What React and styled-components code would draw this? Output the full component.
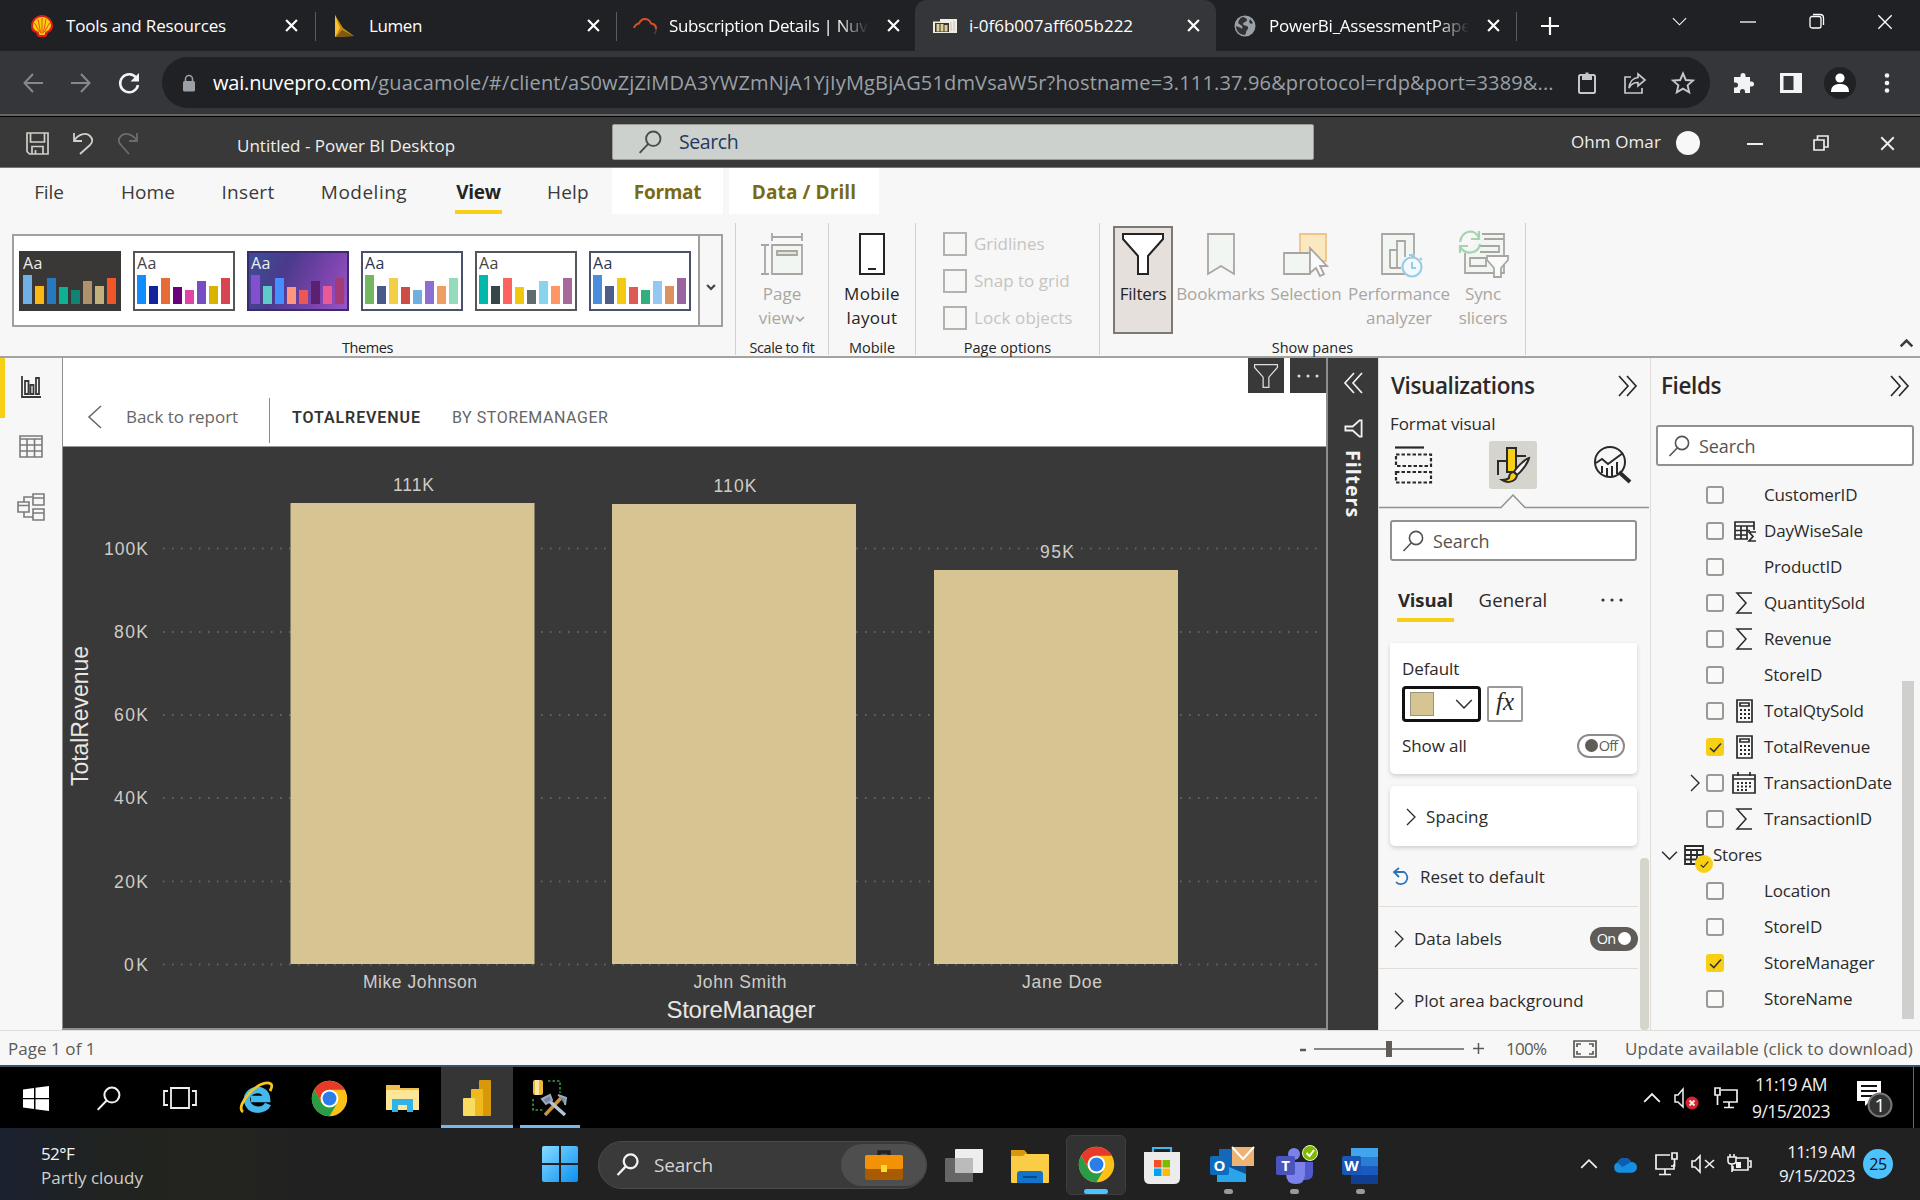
import React from "react";
import styled, { createGlobalStyle, css } from "styled-components";

const UI = `"Open Sans", "Noto Sans", sans-serif`;

const Global = createGlobalStyle`
  * { box-sizing: border-box; }
  body { margin: 0; background: #202124; font-family: ${UI}; overflow: hidden; }
`;

/* ---------- primitives ---------- */
const Screen = styled.div`
  width: 1920px;
  height: 1200px;
  display: flex;
  flex-direction: column;
  overflow: hidden;
`;
const Text = styled.span`
  font-size: ${(p) => p.$s || 17}px;
  font-weight: ${(p) => p.$b || 400};
  letter-spacing: ${(p) => p.$ls || 0}px;
  color: ${(p) => p.$c || "inherit"};
  white-space: nowrap;
  line-height: 24px;
`;
const Cell = styled.div`
  flex: none;
  width: ${(p) => p.$w}px;
  padding-top: ${(p) => p.$pt || 0}px;
  padding-bottom: ${(p) => p.$pb || 0}px;
  display: flex;
  align-items: center;
  justify-content: ${(p) => (p.$left ? "flex-start" : "center")};
`;
const Spacer = styled.div`
  flex: 1;
`;
const Glyph = styled.svg`
  display: block;
  flex: none;
  overflow: visible;
`;
const Ico = ({ w = 24, h, vb, sw = 1.6, children, ...rest }) => (
  <Glyph width={w} height={h || w} viewBox={vb || `0 0 ${w} ${h || w}`} fill="none" stroke="currentColor" strokeWidth={sw} {...rest}>
    {children}
  </Glyph>
);

const Lens = ({ w = 22, sw = 1.6 }) => (
  <Ico w={w} vb="0 0 22 22" sw={sw}>
    <circle cx="14" cy="8" r="6.6" />
    <path d="M9.4 12.8 L1.5 21" />
  </Ico>
);
const Chevron = ({ dir = "down", w = 18, sw = 1.5 }) => {
  const d = { down: "M2 5.5 L9 12.5 L16 5.5", up: "M2 12.5 L9 5.5 L16 12.5", right: "M5 1 L13 9 L5 17", left: "M13 1 L5 9 L13 17" }[dir];
  return (
    <Ico w={w} vb="0 0 18 18" sw={sw}>
      <path d={d} />
    </Ico>
  );
};
const DoubleChevron = ({ left }) => (
  <Ico w={20} h={22} sw={1.7}>
    {left ? <path d="M11 1 L2 11 L11 21 M19 1 L10 11 L19 21" /> : <path d="M1 1 L10 11 L1 21 M9 1 L18 11 L9 21" />}
  </Ico>
);
const Cross = ({ w = 12, sw = 2 }) => (
  <Ico w={w} vb="0 0 12 12" sw={sw}>
    <path d="M1 1 L11 11 M11 1 L1 11" />
  </Ico>
);
const Funnel = ({ w = 30, h = 30, sw = 1.6, fill = "none" }) => (
  <Ico w={w} h={h} vb="0 0 42 42" sw={sw} fill={fill}>
    <path d="M1 1 H41 V6 L26 23 V41 H16 V23 L1 6 Z" />
  </Ico>
);
const ChromeLogo = ({ w = 38 }) => (
  <Glyph width={w} height={w} viewBox="0 0 48 48">
    <circle cx="24" cy="24" r="23" fill="#fbc116" />
    <path d="M4.1 12.5 A23 23 0 0 1 43.9 12.5 H24 A11.5 11.5 0 0 0 14 29.8 Z" fill="#e8392b" />
    <path d="M4.1 12.5 A23 23 0 0 0 24 47 L34 29.8 A11.5 11.5 0 0 1 14 29.8 Z" fill="#2a9c47" />
    <circle cx="24" cy="24" r="11.5" fill="#fff" />
    <circle cx="24" cy="24" r="9" fill="#2b7de9" />
  </Glyph>
);

/* ---------- browser ---------- */
const TabStrip = styled.div`
  height: 51px;
  flex: none;
  display: flex;
  background: #202124;
  color: #fff;
`;
const TabBox = styled.div`
  position: relative;
  width: ${(p) => p.$w}px;
  padding: 0 ${(p) => p.$pr}px 0 ${(p) => p.$pl}px;
  display: flex;
  align-items: center;
  gap: 12px;
  ${(p) =>
    p.$active &&
    css`
      background: #35363a;
      border-radius: 12px 12px 0 0;
    `}
  &::after {
    content: "";
    position: absolute;
    right: 0;
    top: 12px;
    width: 1px;
    height: 29px;
    background: ${(p) => (p.$line ? "#5a5c60" : "transparent")};
  }
`;
const TabTitle = styled.div`
  flex: 1;
  min-width: 0;
  overflow: hidden;
  white-space: nowrap;
  font-size: 17px;
  letter-spacing: ${(p) => p.$ls}px;
  ${(p) => p.$fade && "mask-image: linear-gradient(90deg, #000 84%, transparent 100%);"}
`;
const TabIcon = styled.div`
  width: 24px;
  display: flex;
  justify-content: center;
`;
const Toolbar = styled.div`
  height: 63px;
  flex: none;
  display: flex;
  align-items: center;
  background: #35363a;
  color: #e8eaed;
  padding-left: 9px;
`;
const Omnibox = styled.div`
  width: 1548px;
  height: 51px;
  margin-left: 8px;
  border-radius: 26px;
  background: #202124;
  display: flex;
  align-items: center;
  padding-left: 20px;
`;
const Url = styled.div`
  width: 1350px;
  margin-left: 17px;
  font-size: 20px;
  letter-spacing: ${(p) => p.$ls}px;
  white-space: nowrap;
  color: #9aa0a6;
  b {
    font-weight: 400;
    color: #fff;
    letter-spacing: -0.18px;
  }
`;
const Divider = styled.div`
  height: 3px;
  flex: none;
  background: #636465;
  border-bottom: 1px solid #000;
`;
const ProfileDot = styled.div`
  width: 32px;
  height: 32px;
  border-radius: 50%;
  background: #202124;
  display: flex;
  align-items: center;
  justify-content: center;
`;

const ShellLogo = () => (
  <Glyph width="24" height="24" viewBox="0 0 24 24">
    <path d="M12 1 C18 1 23 6 23 12 C23 16 20 18 18 19 L16 23 H8 L6 19 C3 18 1 16 1 12 C1 6 6 1 12 1Z" fill="#dd1d21" />
    <path d="M12 3 C17 3 21 7 21 12 C20 16 17 17 15.500 18 L14.500 21 H9.500 L8.500 18 C6 17 3 15 3 12 C3 7 7 3 12 3Z" fill="#fbce07" />
    <path d="M12 4 V20 M8 5 L10.600 19 M16 5 L13.400 19 M4.500 9 L9.600 18 M19.500 9 L14.400 18" stroke="#dd1d21" strokeWidth=".7" />
  </Glyph>
);
const LumenLogo = () => (
  <Glyph width="22" height="24" viewBox="0 0 22 24">
    <path d="M1 1 L9 14 L20 22 L1 23 Z" fill="#c28a10" />
    <path d="M1 1 L6 14 L1 23 Z" fill="#fbc02d" />
    <path d="M8 16 L20 22 L2 23 Z" fill="#7d5a14" />
  </Glyph>
);
const CloudLogo = () => (
  <Ico w={24} sw={1.9}>
    <path d="M1 14 C2 11 3 10 6 9.500 C9 3 16 4 18 9.500 C22 10 23.500 12 23 16" stroke="#e04e27" />
    <path d="M23 15 C23 17 22.500 19 21.500 20" stroke="#1d4b63" />
  </Ico>
);
const SheetLogo = () => (
  <Glyph width="24" height="14" viewBox="0 0 24 14">
    <rect width="24" height="14" fill="#f0ede4" />
    <rect width="7" height="2.500" fill="#35363a" />
    <rect x="2" y="4" width="14" height="9" fill="#3a3530" />
    <path d="M3.500 12.500 V5 H6.500 V12.500Z M7.500 12.500 V5 H10.500 V12.500Z M11.500 12.500 V6 H14.500 V12.500Z" fill="#ddcf9a" />
    <path d="M18 3 V12 M21 2 V12" stroke="#c8c4ba" />
  </Glyph>
);
const GlobeLogo = () => (
  <Glyph width="22" height="22" viewBox="0 0 22 22">
    <circle cx="11" cy="11" r="10.500" fill="#9aa0a6" />
    <path d="M9 2 C11 3 13 3 13 5 C13 7 9 7 9 9 C9 11 13 10 14 12 C15 14 12 15 12 18 L11 20 C6 20 2 16 2 11 L7 13 C8 15 9 13 8 11 L4 8 C5 4 7 2 9 2 Z" fill="#303236" />
    <path d="M16 4 L19 8 L17 9 L15 7Z" fill="#303236" />
  </Glyph>
);

const tabs = [
  { t: "Tools and Resources", w: 316, pl: 30, pr: 13, i: <ShellLogo />, line: 1, ls: -0.15 },
  { t: "Lumen", w: 301, pl: 17, pr: 12, i: <LumenLogo />, line: 1, ls: -0.4 },
  { t: "Subscription Details | Nuvepro", w: 298, pl: 16, pr: 10, i: <CloudLogo />, fade: 1, ls: -0.35 },
  { t: "i-0f6b007aff605b222", w: 301, pl: 18, pr: 11, i: <SheetLogo />, active: 1, ls: 0 },
  { t: "PowerBi_AssessmentPaper.pdf", w: 301, pl: 17, pr: 12, i: <GlobeLogo />, line: 1, fade: 1, ls: -0.25 },
];

const Browser = () => (
  <>
    <TabStrip>
      {tabs.map((t) => (
        <TabBox key={t.t} $w={t.w} $pl={t.pl} $pr={t.pr} $active={t.active} $line={t.line}>
          <TabIcon>{t.i}</TabIcon>
          <TabTitle $fade={t.fade} $ls={t.ls}>{t.t}</TabTitle>
          <TabIcon><Cross w={13} /></TabIcon>
        </TabBox>
      ))}
      <Cell $w={65}>
        <Ico w={18} sw={2.2}><path d="M9 0 V18 M0 9 H18" /></Ico>
      </Cell>
      <Spacer />
      <Cell $w={68} $pb={8}><Chevron w={17} sw={1.1} /></Cell>
      <Cell $w={70} $pb={8}><Ico w={16} sw={1.3}><path d="M0 8 H16" /></Ico></Cell>
      <Cell $w={67} $pb={8}>
        <Ico w={15} sw={1.3}>
          <rect x="1" y="2.500" width="11" height="11.500" rx="2" />
          <path d="M4 .5 H11 Q14.500 .5 14.500 4 V11" />
        </Ico>
      </Cell>
      <Cell $w={70} $pb={8}><Cross w={16} sw={1} /></Cell>
    </TabStrip>
    <Toolbar>
      <Cell $w={48}>
        <Ico w={20} sw={2} color="#85888c"><path d="M20 10 H1.500 M10 1 L1.500 10 L10 19" /></Ico>
      </Cell>
      <Cell $w={48}>
        <Ico w={20} sw={2} color="#85888c"><path d="M0 10 H18.500 M10 1 L18.500 10 L10 19" /></Ico>
      </Cell>
      <Cell $w={48}>
        <Ico w={22} sw={2.5} color="#f1f3f4">
          <path d="M18.500 6 A9 9 0 1 0 20 13" />
          <path d="M21 1 V9.500 H12.500 Z" fill="currentColor" stroke="none" />
        </Ico>
      </Cell>
      <Cell $w={1} />
      <Omnibox>
        <Ico w={14} h={18} color="#9aa0a6">
          <rect x="1" y="7" width="12" height="10.500" rx="1.500" fill="currentColor" stroke="none" />
          <path d="M3.500 8 V5 a3.500 3.500 0 0 1 7 0 V8" />
        </Ico>
        <Url $ls={0.15}>
          <b>wai.nuvepro.com</b>/guacamole/#/client/aS0wZjZiMDA3YWZmNjA1YjIyMgBjAG51dmVsaW5r?hostname=3.111.37.96&amp;protocol=rdp&amp;port=3389&amp;...
        </Url>
        <Cell $w={48}>
          <Ico w={18} h={22} sw={2} color="#c4c7cb">
            <rect x="1" y="3" width="16" height="18" rx="1.500" />
            <path d="M5 3 H13 V7 H5Z M7.500 1.500 H10.500" fill="currentColor" />
          </Ico>
        </Cell>
        <Cell $w={48}>
          <Ico w={22} sw={1.700} color="#c4c7cb">
            <path d="M7 5 H1 V21 H18 V16" />
            <path d="M14 2 L21 8 L14 14 V10.500 C10 10.500 7 12 5 16 C5.500 10 9 6 14 5.500 Z" />
          </Ico>
        </Cell>
        <Cell $w={48}>
          <Ico w={22} sw={1.900} color="#c4c7cb">
            <path d="M11 1.500 L13.800 8 L21 8.600 L15.600 13.300 L17.200 20.300 L11 16.600 L4.800 20.300 L6.400 13.300 L1 8.600 L8.200 8 Z" />
          </Ico>
        </Cell>
      </Omnibox>
      <Cell $w={65}>
        <Ico w={22} color="#f1f3f4">
          <path d="M8.500 5 V3.500 a2.500 2.500 0 0 1 5 0 V5 H18 V9.500 H19.500 a2.500 2.500 0 0 1 0 5 H18 V21 H13 V19.500 a2.500 2.500 0 0 0 -5 0 V21 H2 V15.500 H3.500 a2.500 2.500 0 0 0 0 -5 H2 V5 Z" fill="currentColor" stroke="none" />
        </Ico>
      </Cell>
      <Cell $w={32}>
        <Ico w={22} color="#f1f3f4">
          <path d="M0 1 H22 V21 H0Z M3.500 4 V18 H13.500 V4Z" fillRule="evenodd" fill="currentColor" stroke="none" />
        </Ico>
      </Cell>
      <Cell $w={65}>
        <ProfileDot>
          <Ico w={20}>
            <circle cx="10" cy="5" r="4.600" fill="#fff" stroke="none" />
            <path d="M1 19 C1 12 6 11 10 11 C14 11 19 12 19 19Z" fill="#fff" stroke="none" />
          </Ico>
        </ProfileDot>
      </Cell>
      <Cell $w={30}>
        <Ico w={6} h={20}>
          <g fill="#f1f3f4" stroke="none"><circle cx="3" cy="2.500" r="2.300" /><circle cx="3" cy="10" r="2.300" /><circle cx="3" cy="17.500" r="2.300" /></g>
        </Ico>
      </Cell>
    </Toolbar>
    <Divider />
  </>
);

/* ---------- Power BI title bar ---------- */
const TitleBar = styled.div`
  height: 51px;
  flex: none;
  display: flex;
  align-items: center;
  background: #393939;
  border-bottom: 1px solid #777;
  color: #eee;
  padding-top: 2px;
`;
const TitleSearch = styled.div`
  width: 702px;
  height: 36px;
  margin-top: -2px;
  background: #ccd1cd;
  border: 1px solid #9a9c9a;
  border-radius: 2px;
  display: flex;
  align-items: center;
  padding-left: 25px;
  gap: 17px;
  color: #4a4a4a;
`;
const Avatar = styled.div`
  width: 24px;
  height: 24px;
  border-radius: 50%;
  background: #f8f8f8;
`;
const Title = () => (
  <TitleBar>
    <Cell $w={14} />
    <Cell $w={46}>
      <Ico w={23} sw={1.700} color="#cfd0c8">
        <path d="M1 1 H22 V22 H3.500 L1 19.500Z M4.500 1 V10 H18.500 V1 M6 22 V14.500 H17 V22 M9.500 22 V18" />
      </Ico>
    </Cell>
    <Cell $w={45}>
      <Ico w={22} h={23} sw={1.800} color="#cfd0c8">
        <path d="M2 1 V9 H10 M2 9 C6 2 14 0 18 4 C22 8 20 11 18 13 L8 22" />
      </Ico>
    </Cell>
    <Cell $w={45}>
      <Ico w={22} h={23} sw={1.800} color="#6c6d69">
        <path d="M20 1 V9 H12 M20 9 C16 2 8 0 4 4 C0 8 2 11 4 13 L12 22" />
      </Ico>
    </Cell>
    <Cell $w={87} />
    <Cell $w={375} $left $pt={5}>
      <Text $s={17}>Untitled - Power BI Desktop</Text>
    </Cell>
    <TitleSearch>
      <Lens w={24} sw={1.700} />
      <Text $s={19.500} $ls={-0.4} $c="#243a5e">Search</Text>
    </TitleSearch>
    <Spacer />
    <Cell $w={105} $left $pb={2}><Text $s={17} $ls={0.1}>Ohm Omar</Text></Cell>
    <Avatar />
    <Cell $w={22} />
    <Cell $w={66}><Ico w={16} h={16} sw={2}><path d="M0 9 H16" /></Ico></Cell>
    <Cell $w={66}><Ico w={16} sw={1.700}><path d="M1 5 H11 V15 H1Z M4.500 5 V1 H15 V12 H11" /></Ico></Cell>
    <Cell $w={66}><Cross w={15} sw={1.500} /></Cell>
  </TitleBar>
);

/* ---------- Ribbon ---------- */
const MenuBar = styled.div`
  height: 46px;
  flex: none;
  display: flex;
  background: #f7f7f7;
  color: #3b3a39;
`;
const MenuItem = styled.div`
  flex: none;
  width: ${(p) => p.$w}px;
  margin-left: ${(p) => p.$ml || 0}px;
  display: flex;
  align-items: center;
  justify-content: center;
  padding-top: 5px;
  border-bottom: 4px solid ${(p) => (p.$on ? "#f7cf14" : "transparent")};
  font-size: 19px;
  white-space: nowrap;
  letter-spacing: ${(p) => p.$ls || 0}px;
  font-weight: ${(p) => (p.$on || p.$ctx ? 700 : 400)};
  color: ${(p) => (p.$ctx ? "#7a6a16" : p.$on ? "#252423" : "#3b3a39")};
  ${(p) => p.$ctx && "background:#fff; border-bottom-color:#fff;"}
`;
const RibbonBox = styled.div`
  height: 144px;
  flex: none;
  display: flex;
  background: #f7f7f7;
  border-bottom: 2px solid #a3a4a0;
  padding-top: 9px;
`;
const Group = styled.div`
  width: ${(p) => p.$w}px;
  height: 132px;
  flex: none;
  border-right: 1px solid #d0d0cc;
  display: flex;
  flex-direction: column;
  justify-content: space-between;
`;
const GroupBody = styled.div`
  flex: 1;
  display: flex;
  padding: ${(p) => p.$p || "0"};
`;
const GroupLabel = styled.div`
  height: 14px;
  line-height: 14px;
  text-align: center;
  font-size: 14.5px;
  letter-spacing: ${(p) => p.$ls ?? -0.4}px;
  color: #252423;
  white-space: nowrap;
`;
const Gallery = styled.div`
  width: 711px;
  height: 93px;
  display: flex;
  align-items: center;
  gap: 12px;
  padding-left: 5px;
  background: #fff;
  border: 2px solid #a0a19b;
`;
const Thumb = styled.div`
  width: 102px;
  height: 60px;
  flex: none;
  border: 2px solid ${(p) => p.$bd};
  background: ${(p) => p.$bg};
  padding: 1px 2px 5px;
  color: ${(p) => p.$fg};
  display: flex;
  flex-direction: column;
  justify-content: space-between;
`;
const ThumbAa = styled.div`
  font-size: 16px;
  line-height: 18px;
  letter-spacing: 0.5px;
`;
const ThumbBars = styled.div`
  display: flex;
  gap: 3px;
  align-items: flex-end;
`;
const ThumbBar = styled.div`
  width: 9px;
  height: ${(p) => p.$h}px;
  background: ${(p) => p.$c};
`;
const GalleryMore = styled.div`
  align-self: stretch;
  width: 24px;
  margin-left: -5px;
  border-left: 2px solid #a0a19b;
  background: #f7f7f7;
  display: flex;
  flex: 1;
  align-items: center;
  justify-content: center;
  padding-top: 12px;
  color: #444;
`;
const BigButton = styled.div`
  width: ${(p) => p.$w}px;
  height: 108px;
  flex: none;
  display: flex;
  flex-direction: column;
  align-items: center;
  padding-top: 5px;
  color: ${(p) => (p.$off ? "#a9a6a2" : "#252423")};
  border: 2px solid ${(p) => (p.$sel ? "#7d7975" : "transparent")};
  background: ${(p) => (p.$sel ? "#e6e0dc" : "transparent")};
  font-size: 17px;
  line-height: 24px;
  letter-spacing: ${(p) => p.$ls || 0}px;
  text-align: center;
  white-space: nowrap;
  > svg { margin-bottom: 7px; }
`;
const ViewLine = styled.div`
  display: flex;
  align-items: center;
  svg { margin: 2px 0 0 1px; }
`;
const CheckLine = styled.div`
  display: flex;
  align-items: center;
  gap: 7px;
  height: 24px;
  color: #c6c4c1;
`;
const BigCheck = styled.div`
  width: 24px;
  height: 24px;
  border: 2px solid #b5b2ad;
`;
const CheckCol = styled.div`
  display: flex;
  flex-direction: column;
  gap: 13px;
`;
const Collapse = styled.div`
  flex: 1;
  display: flex;
  align-items: flex-end;
  justify-content: flex-end;
  padding: 0 6px 5px 0;
  color: #3b3a39;
`;

const heights = [29, 18, 26, 17, 14, 23, 18, 26];
const themes = [
  { bg: "#393837", fg: "#eee", bd: "#393837", c: ["#6fb1e6", "#fcb714", "#2878bd", "#0eb194", "#108372", "#af916d", "#c4b07b", "#f15628"] },
  { bg: "#fff", fg: "#444", bd: "#55565a", c: ["#118dff", "#12239e", "#e66c37", "#6b007b", "#e044a7", "#744ec2", "#d9b300", "#d64550"] },
  { bg: "linear-gradient(115deg,#3f4a92 10%,#4b3a8c 35%,#7f45b0 75%,#9a55c6)", fg: "#eee", bd: "#3a2a6e", c: ["#8250cf", "#5ecbc8", "#438fff", "#ff977e", "#eb5757", "#5b2071", "#ec5a96", "#a43b76"] },
  { bg: "#fff", fg: "#2c3550", bd: "#4a516a", c: ["#74b761", "#4a588a", "#f2cf44", "#cd4c46", "#71afe2", "#8d6fd1", "#ee9e64", "#95dabb"] },
  { bg: "#fff", fg: "#444", bd: "#55565a", c: ["#01b8aa", "#374649", "#fd625e", "#f2c80f", "#5f6b6d", "#8ad4eb", "#fe9666", "#a66999"] },
  { bg: "#fff", fg: "#2c3550", bd: "#4a516a", c: ["#4a8ddc", "#4c5d8a", "#f3c911", "#dc5b57", "#33ae81", "#95c8f0", "#dd915f", "#9a64a0"] },
];

const Ribbon = () => (
  <>
    <MenuBar>
      <MenuItem $w={32} $ml={33} $ls={-0.1}>File</MenuItem>
      <MenuItem $w={56} $ml={55} $ls={0.1}>Home</MenuItem>
      <MenuItem $w={54} $ml={45} $ls={0.3}>Insert</MenuItem>
      <MenuItem $w={88} $ml={45} $ls={0.5}>Modeling</MenuItem>
      <MenuItem $w={47} $ml={47} $on $ls={-0.3}>View</MenuItem>
      <MenuItem $w={44} $ml={44} $ls={0.2}>Help</MenuItem>
      <MenuItem $w={111} $ml={22} $ctx $ls={-0.3}>Format</MenuItem>
      <MenuItem $w={150} $ml={6} $ctx $ls={0.1}>Data / Drill</MenuItem>
    </MenuBar>
    <RibbonBox>
      <Group $w={736}>
        <GroupBody $p="11px 0 0 12px">
          <Gallery>
            {themes.map((t, i) => (
              <Thumb key={i} $bg={t.bg} $fg={t.fg} $bd={t.bd}>
                <ThumbAa>Aa</ThumbAa>
                <ThumbBars>{t.c.map((c, j) => <ThumbBar key={j} $c={c} $h={heights[j]} />)}</ThumbBars>
              </Thumb>
            ))}
            <GalleryMore><Chevron w={10} sw={4} /></GalleryMore>
          </Gallery>
        </GroupBody>
        <GroupLabel>Themes</GroupLabel>
      </Group>
      <Group $w={93}>
        <GroupBody $p="3px 0 0 0">
          <BigButton $w={92} $off>
            <Ico w={42} sw={1.800}>
              <path d="M11 12 H41 V41 H11Z" fill="#f2f6f2" />
              <path d="M16 18 H36 V22 H16Z" fill="#e4e4da" />
              <path d="M11 4 H41 M11 0 V8 M41 0 V8 M4 12 V41 M0 12 H8 M0 41 H8" />
            </Ico>
            <span>Page</span>
            <ViewLine>view<Chevron w={10} sw={3} /></ViewLine>
          </BigButton>
        </GroupBody>
        <GroupLabel>Scale to fit</GroupLabel>
      </Group>
      <Group $w={87}>
        <GroupBody $p="3px 0 0 0">
          <BigButton $w={86} $ls={0.3}>
            <Ico w={26} h={42} sw={2}><path d="M1 1 H25 V41 H1Z" fill="#fff" /><path d="M9 36 H17" /></Ico>
            <span>Mobile</span>
            <span>layout</span>
          </BigButton>
        </GroupBody>
        <GroupLabel $ls={0}>Mobile</GroupLabel>
      </Group>
      <Group $w={184}>
        <GroupBody $p="9px 0 0 27px">
          <CheckCol>
            <CheckLine><BigCheck /><Text $s={17}>Gridlines</Text></CheckLine>
            <CheckLine><BigCheck /><Text $s={17}>Snap to grid</Text></CheckLine>
            <CheckLine><BigCheck /><Text $s={17} $ls={0.1}>Lock objects</Text></CheckLine>
          </CheckCol>
        </GroupBody>
        <GroupLabel $ls={0}>Page options</GroupLabel>
      </Group>
      <Group $w={426}>
        <GroupBody $p="3px 0 0 13px">
          <BigButton $w={60} $sel $ls={-0.2}>
            <Funnel w={42} h={42} sw={2} fill="#fff" />
            <span>Filters</span>
          </BigButton>
          <BigButton $w={95} $off $ls={-0.1}>
            <Ico w={28} h={42} sw={1.800}><path d="M1 1 H27 V41 L14 33 L1 41Z" fill="#f2f6f2" /></Ico>
            <span>Bookmarks</span>
          </BigButton>
          <BigButton $w={76} $off $ls={-0.1}>
            <Ico w={46} h={42} sw={1.800}>
              <path d="M17 1 H43 V28 H17Z" fill="#fae9c0" stroke="#f0c488" />
              <path d="M1 20 H27 V41 H1Z" fill="#f2f6f2" />
              <path d="M27 15 V40 L33 35 L37 43 L41 41 L37 33 L44 33 Z" fill="#fafafa" />
            </Ico>
            <span>Selection</span>
          </BigButton>
          <BigButton $w={110} $off $ls={-0.1}>
            <Ico w={36} h={42} sw={1.800}>
              <path d="M1 1 H33 V41 H1Z" fill="#f2f6f2" />
              <path d="M9 35 V17 H16 V35 M16 35 V8 H24 V24 M9 35 H20" />
              <circle cx="31" cy="34" r="9.500" fill="#f2f9fd" stroke="#9ccbe8" strokeWidth="2.200" />
              <path d="M31 29 V35 H35 M28 22 H34 M31 22 V25 M39 25 L41 27" stroke="#9ccbe8" strokeWidth="2" />
            </Ico>
            <span>Performance</span>
            <span>analyzer</span>
          </BigButton>
          <BigButton $w={58} $off $ls={-0.1}>
            <Ico w={50} h={42} sw={1.800}>
              <path d="M24 1 H46 V40 H7 V20" fill="#f2f6f2" />
              <path d="M26 6 H46 M22 13 H41 V19 H22 M12 25 H28 V33 H12Z" />
              <path d="M29 23 H50 V27 L43 35 V44 H36 V35 L29 27Z" fill="#fafafa" />
              <g stroke="#a5d3b0" strokeWidth="2.200">
                <path d="M2 9 C4 -3 17 -5 21 5 M21 -2 V6 H13 M22 11 C20 22 6 22 2 13 M2 20 V13 H10" />
              </g>
            </Ico>
            <span>Sync</span>
            <span>slicers</span>
          </BigButton>
        </GroupBody>
        <GroupLabel $ls={0}>Show panes</GroupLabel>
      </Group>
      <Collapse><Chevron dir="up" w={15} sw={3} /></Collapse>
    </RibbonBox>
  </>
);

/* ---------- workspace ---------- */
const Workspace = styled.div`
  height: 672px;
  flex: none;
  display: flex;
  background: #f7f7f7;
`;
const Rail = styled.div`
  width: 62px;
  flex: none;
  display: flex;
  flex-direction: column;
  color: #7c7b78;
`;
const RailItem = styled.div`
  height: 60px;
  display: flex;
  align-items: center;
  justify-content: center;
  border-left: 5px solid ${(p) => (p.$on ? "#f7cf14" : "transparent")};
  padding: 0 5px 3px 0;
  color: ${(p) => (p.$on ? "#3a3938" : "inherit")};
`;
const Canvas = styled.div`
  width: 1266px;
  flex: none;
  border-left: 1px solid #8e8e8c;
  border-right: 2px solid #8e8e8c;
  border-bottom: 2px solid #8e8e8c;
  background: #fff;
  display: flex;
  flex-direction: column;
`;
const CanvasHead = styled.div`
  height: 89px;
  flex: none;
  display: flex;
  border-bottom: 1px solid #9a9a98;
  color: #666;
`;
const HeadRow = styled.div`
  margin-top: 35px;
  height: 48px;
  display: flex;
  align-items: center;
`;
const VLine = styled.div`
  width: 1px;
  height: 45px;
  margin: 6px 22px 0 0;
  background: #8b8b8b;
`;
const Din = styled.span`
  font-family: Roboto, "Open Sans", sans-serif;
  font-size: 16px;
  letter-spacing: ${(p) => p.$ls}px;
  font-weight: ${(p) => p.$b || 400};
  color: ${(p) => p.$c};
  white-space: nowrap;
`;
const DarkButton = styled.div`
  width: 36px;
  height: 35px;
  margin-left: 6px;
  background: #393939;
  color: #ddd;
  display: flex;
  align-items: center;
  justify-content: center;
`;
const FilterPane = styled.div`
  width: 50px;
  flex: none;
  background: #393939;
  color: #f2f2f2;
  display: flex;
  flex-direction: column;
  align-items: center;
  padding-top: 14px;
  gap: 26px;
`;
const Turned = styled.div`
  transform: rotate(90deg);
  padding-bottom: 0;
`;
const VerticalText = styled.div`
  writing-mode: vertical-rl;
  margin-top: -13px;
  font-size: 19.5px;
  font-weight: 700;
  letter-spacing: 1px;
  line-height: 24px;
`;

const Plot = () => {
  const ticks = [["100K", 101, 44], ["80K", 184.5, 34], ["60K", 267.5, 34], ["40K", 350.5, 34], ["20K", 434, 34], ["0K", 517, 24]];
  const bars = [
    { n: "Mike Johnson", v: "111K", x: 226.500, top: 56, c: 357, w: 114, vw: 41 },
    { n: "John Smith", v: "110K", x: 548, top: 57, c: 677, w: 93, vw: 43 },
    { n: "Jane Doe", v: "95K", x: 870, top: 123, c: 999, w: 80, vw: 34 },
  ];
  const F = `"Liberation Sans", sans-serif`;
  return (
    <Glyph width="1263" height="581" viewBox="-1 0 1263 581">
      <rect x="-1" width="1263" height="581" fill="#393939" />
      {ticks.map(([l, y, w]) => (
        <g key={l}>
          <path d={`M99 ${y + 0.500} H1256`} stroke="#666664" strokeWidth="2" strokeDasharray="1.500 7.500" />
          <text x="84" y={y + 6.500} fill="#cfccc6" fontFamily={F} fontSize="17.500" textAnchor="end" textLength={w}>{l}</text>
        </g>
      ))}
      {bars.map((b) => (
        <g key={b.n} fill="#cfccc6" fontFamily={F} fontSize="17.500" textAnchor="middle">
          <rect x={b.x} y={b.top} width="244" height={517 - b.top} fill="#d6c592" />
          <text x={b.x + 123} y={b.top - 12} textLength={b.vw}>{b.v}</text>
          <text x={b.c - 1} y="541" textLength={b.w}>{b.n}</text>
        </g>
      ))}
      <text x="677" y="571" fill="#e8e6e2" fontFamily={F} fontSize="24" textAnchor="middle" textLength="149">StoreManager</text>
      <text transform="translate(24 269) rotate(-90)" fill="#e8e6e2" fontFamily={F} fontSize="23" textAnchor="middle" textLength="140">TotalRevenue</text>
    </Glyph>
  );
};

/* ---------- panes ---------- */
const Pane = styled.div`
  width: ${(p) => p.$w}px;
  flex: none;
  display: flex;
  border-left: 1px solid #e1dcd7;
  background: #f7f7f7;
  color: #2b2a29;
`;
const PaneCol = styled.div`
  flex: 1;
  min-width: 0;
  display: flex;
  flex-direction: column;
`;
const PaneHead = styled.div`
  height: 56px;
  flex: none;
  display: flex;
  align-items: center;
  justify-content: space-between;
  padding: 0 ${(p) => p.$pr}px 0 ${(p) => p.$pl}px;
`;
const SearchBox = styled.div`
  height: 41px;
  flex: none;
  margin: ${(p) => p.$m};
  border: 2px solid #92918f;
  border-radius: 3px;
  background: #fff;
  display: flex;
  align-items: center;
  gap: 9px;
  padding-left: 10px;
  color: #55534f;
`;
const SubHead = styled.div`
  height: 20px;
  padding-left: 11px;
  display: flex;
  align-items: center;
`;
const ModeRow = styled.div`
  display: flex;
  height: 48px;
  margin-top: 7px;
  align-items: center;
  padding-left: 16px;
`;
const ModeOn = styled.div`
  width: 48px;
  height: 48px;
  margin: 0 57px;
  background: #d5d5cd;
  border-radius: 3px;
  display: flex;
  align-items: center;
  justify-content: center;
`;
const TabsRow = styled.div`
  height: 46px;
  margin-top: 15px;
  padding-left: 18px;
  display: flex;
  align-items: center;
`;
const PaneTab = styled.div`
  flex: none;
  height: 46px;
  width: ${(p) => p.$w}px;
  display: flex;
  align-items: center;
  justify-content: center;
  padding-top: 5px;
  border-bottom: 4px solid ${(p) => (p.$on ? "#f7cf14" : "transparent")};
  margin-right: 22px;
`;
const Card = styled.div`
  width: 247px;
  flex: none;
  height: ${(p) => p.$h}px;
  margin: ${(p) => p.$mt}px 0 0 11px;
  padding: ${(p) => p.$p};
  background: #fff;
  border-radius: ${(p) => p.$r};
  box-shadow: 0 2px 4px rgba(0, 0, 0, 0.16);
`;
const Row = styled.div`
  display: flex;
  align-items: center;
  height: ${(p) => p.$h}px;
  gap: ${(p) => p.$gap || 0}px;
  padding-top: ${(p) => p.$pt || 0}px;
  padding-left: ${(p) => p.$pl || 0}px;
  flex: none;
  border-bottom: ${(p) => (p.$line ? "1px solid #e0dcd8" : "none")};
`;
const ColorPick = styled.div`
  width: 79px;
  height: 36px;
  border: 3px solid #111;
  border-radius: 4px;
  display: flex;
  align-items: center;
  justify-content: space-between;
  padding: 0 4px 0 5px;
`;
const Swatch = styled.div`
  width: 24px;
  height: 24px;
  background: #d6c592;
  border: 1px solid #9b9580;
`;
const FxBox = styled.div`
  width: 36px;
  height: 36px;
  margin-left: 6px;
  border: 2px solid #9b9993;
  border-radius: 2px;
  font: italic 25px/28px "Liberation Serif", serif;
  text-align: center;
`;
const Toggle = styled.div`
  width: 48px;
  height: 24px;
  border-radius: 12px;
  margin-left: auto;
  display: flex;
  align-items: center;
  justify-content: center;
  gap: 1px;
  font-size: 14.5px;
  letter-spacing: -0.9px;
  border: 2px solid ${(p) => (p.$on ? "#605c58" : "#8f8c88")};
  background: ${(p) => (p.$on ? "#605c58" : "#fff")};
  color: ${(p) => (p.$on ? "#fff" : "#605c58")};
  &::before,
  &::after {
    width: 13px;
    height: 13px;
    border-radius: 50%;
    background: currentColor;
  }
  &::before { content: ${(p) => (p.$on ? "none" : '""')}; }
  &::after { content: ${(p) => (p.$on ? '""' : "none")}; margin-left: 2px; }
`;
const ScrollTrack = styled.div`
  width: ${(p) => p.$w}px;
  margin-right: ${(p) => p.$mr || 0}px;
  display: flex;
  flex-direction: column;
`;
const ScrollThumb = styled.div`
  margin: ${(p) => p.$mt}px 0 0 ${(p) => p.$ml || 0}px;
  width: ${(p) => p.$w}px;
  height: ${(p) => p.$h}px;
  border-radius: ${(p) => p.$r || 0}px;
  background: ${(p) => p.$c};
`;

const VisualPane = () => (
  <Pane $w={272}>
    <PaneCol>
      <PaneHead $pl={12} $pr={0}>
        <Text $s={22.500} $b={600} $ls={-0.4}>Visualizations</Text>
        <DoubleChevron />
      </PaneHead>
      <SubHead><Text $s={17} $ls={-0.1}>Format visual</Text></SubHead>
      <ModeRow>
        <Ico w={37} h={38} sw={2.200}>
          <path d="M0 1.500 H29" />
          <path d="M1 8.500 H36 V20 H1Z M1 26 H36 V36.500 H1Z" strokeDasharray="3.500 2" />
        </Ico>
        <ModeOn>
          <Ico w={34} h={36} sw={2}>
            <path d="M2 28 V14 H10 M19 9 H30" />
            <path d="M11 1 H20 V25 H11Z" fill="#f7cf14" />
            <path d="M33 11 C29 12 20 21 18 25 L21 28 C26 24 32 16 33 11Z" fill="#f7f7f7" />
            <path d="M18 25 C14 25 13 29 13 31 C11 33 8 33 6 33 C10 36 20 36 21 28Z" fill="#f7cf14" />
          </Ico>
        </ModeOn>
        <Ico w={38} h={38} sw={2}>
          <circle cx="16" cy="16" r="15" />
          <path d="M25 26 L36 36" strokeWidth="4" />
          <path d="M2 17 L8 13 L14 18 L29 7 M8 20 V27 M13 22 V30 M18 20 V30 M23 16 V28" />
        </Ico>
      </ModeRow>
      <Ico w={270} h={20} sw={1.500} color="#92918f"><path d="M0 18.500 H122 L134 6 L146 18.500 H270" /></Ico>
      <SearchBox $m="11px 1px 0 11px"><Lens /><Text $s={18} $ls={-0.1}>Search</Text></SearchBox>
      <TabsRow>
        <PaneTab $on $w={57}><Text $s={18.500} $b={700} $ls={-0.1}>Visual</Text></PaneTab>
        <PaneTab $w={74}><Text $s={18.500} $ls={0.1}>General</Text></PaneTab>
        <Cell $w={80} $pt={2}>
          <Ico w={22} h={4}><g fill="#333" stroke="none"><circle cx="2" cy="2" r="1.600" /><circle cx="11" cy="2" r="1.600" /><circle cx="20" cy="2" r="1.600" /></g></Ico>
        </Cell>
      </TabsRow>
      <Card $h={131} $mt={21} $p="13px 12px 0 12px" $r="0 0 5px 5px">
        <Row $h={25}><Text $s={17} $ls={-0.1}>Default</Text></Row>
        <Row $h={46}>
          <ColorPick><Swatch /><Chevron w={20} sw={1.300} /></ColorPick>
          <FxBox>fx</FxBox>
        </Row>
        <Row $h={37}><Text $s={17} $ls={-0.1}>Show all</Text><Toggle>Off</Toggle></Row>
      </Card>
      <Card $h={60} $mt={12} $p="0 0 0 12px" $r="5px">
        <Row $h={60} $gap={6} $pt={2}><Chevron dir="right" sw={1.300} /><Text $s={17} $ls={0.1}>Spacing</Text></Row>
      </Card>
      <Row $h={61} $pl={14} $pt={2} $gap={8} $line>
        <Ico w={19} sw={1.800} color="#2a73b8"><path d="M1 4 H11 A6.500 6.500 0 1 1 3 14 M6 0 L1 4 L6 9" /></Ico>
        <Text $s={17}>Reset to default</Text>
      </Row>
      <Row $h={62} $pl={11} $pt={2} $gap={6} $line>
        <Chevron dir="right" sw={1.300} />
        <Text $s={17}>Data labels</Text>
        <Toggle $on>On</Toggle>
      </Row>
      <Row $h={61} $pl={11} $pt={2} $gap={6}>
        <Chevron dir="right" sw={1.300} />
        <Text $s={17}>Plot area background</Text>
      </Row>
    </PaneCol>
    <ScrollTrack $w={12}>
      <ScrollThumb $mt={500} $w={9} $ml={2} $h={172} $r={4} $c="#d5d5cd" />
    </ScrollTrack>
  </Pane>
);

const FieldLine = styled.div`
  height: 36px;
  flex: none;
  display: flex;
  align-items: center;
  padding-left: 31px;
`;
const Check = styled.div`
  flex: none;
  width: 18px;
  height: 18px;
  margin-left: -1px;
  border-radius: 3px;
  border: 2px solid ${(p) => (p.$on ? "#f7cf14" : "#9b9993")};
  background: ${(p) => (p.$on ? "#f7cf14" : "#f9f9f9")};
  display: flex;
  align-items: center;
  justify-content: center;
  color: #333;
`;
const TableBadge = styled.div`
  position: relative;
  width: 24px;
  height: 30px;
  padding-top: 5px;
  i {
    position: absolute;
    left: 11px;
    top: 15px;
    width: 18px;
    height: 18px;
    border-radius: 50%;
    background: #f7cf14;
    display: flex;
    align-items: center;
    justify-content: center;
  }
`;
const icons = {
  sum: <Ico w={17} h={22} sw={1.500}><path d="M16 1 H1 L10 11 L1 21 H16" /></Ico>,
  calc: (
    <Ico w={17} h={24} sw={1.700}>
      <path d="M1 1 H16 V23 H1Z M4 4 H13 V7 H4Z" />
      <path d="M4 11 H14 M4 15 H14 M4 19 H14" strokeDasharray="2 2" strokeWidth="2" />
    </Ico>
  ),
  cal: (
    <Ico w={24} h={22} sw={1.700}>
      <path d="M1 3 H23 V21 H1Z M1 7 H23 M6 0 V4 M18 0 V4" />
      <path d="M5 11 H20 M5 14.500 H20 M5 18 H17" strokeDasharray="2 2" strokeWidth="1.800" />
    </Ico>
  ),
  table: (
    <Ico w={21} h={21} sw={1.700}>
      <path d="M14 18 H1 V1 H20 V9 M1 5 H20 M7 5 V18 M13 5 V18 M1 9.500 H16 M1 14 H13" />
      <path d="M22 11 H15 L19 15.500 L15 20 H22" />
    </Ico>
  ),
};
const fields = [
  ["CustomerID"], ["DayWiseSale", "table"], ["ProductID"], ["QuantitySold", "sum"], ["Revenue", "sum"], ["StoreID"],
  ["TotalQtySold", "calc"], ["TotalRevenue", "calc", 1], ["TransactionDate", "cal", 0, 1], ["TransactionID", "sum"],
];
const storeFields = [["Location"], ["StoreID"], ["StoreManager", null, 1], ["StoreName"]];
const Tick = ({ w = 13 }) => <Ico w={w} vb="0 0 13 13" sw={1.600}><path d="M1 7 L4.800 10.500 L12 2.500" /></Ico>;
const Field = ({ f: [name, icon, on, open] }) => (
  <FieldLine>
    <Cell $w={25}>{open ? <Chevron dir="right" sw={1.400} /> : null}</Cell>
    <Check $on={on}>{on ? <Tick /> : null}</Check>
    <Cell $w={40}>{icon ? icons[icon] : null}</Cell>
    <Text $s={17} $ls={-0.15}>{name}</Text>
  </FieldLine>
);
const FieldsPane = () => (
  <Pane $w={270}>
    <PaneCol>
      <PaneHead $pl={10} $pr={0}><Text $s={22.500} $b={600} $ls={-0.4}>Fields</Text></PaneHead>
      <SearchBox $m="11px -24px 11px 5px"><Lens /><Text $s={18} $ls={-0.1}>Search</Text></SearchBox>
      {fields.map((f) => <Field key={f[0]} f={f} />)}
      <Row $h={36} $pl={9} $gap={5}>
        <Chevron w={19} sw={1.400} />
        <TableBadge>
          <Ico w={20} h={20} sw={1.800}><path d="M1 1 H19 V19 H1Z M1 5 H19 M1 10 H19 M1 14.500 H19 M7 5 V19 M13 5 V19" /></Ico>
          <i><Tick w={9} /></i>
        </TableBadge>
        <Text $s={17} $ls={-0.2}>Stores</Text>
      </Row>
      {storeFields.map((f) => <Field key={f[0]} f={f} />)}
    </PaneCol>
    <ScrollTrack $w={24} $mr={6}>
      <Row $h={56}><DoubleChevron /></Row>
      <ScrollThumb $w={12} $mt={267} $ml={12} $h={338} $c="#cfcfcd" />
    </ScrollTrack>
  </Pane>
);

const Main = () => (
  <Workspace>
    <Rail>
      <RailItem $on>
        <Ico w={20} h={22} sw={1.800}><path d="M1 0 V21 H20 M4 5 H7.500 V18 H4Z M9.500 9 H12.500 V18 H9.500Z M15 2 H18 V18 H15Z" /></Ico>
      </RailItem>
      <RailItem>
        <Ico w={24} h={23} sw={1.600}><path d="M1 1 H23 V22 H1Z M1 4 H23 M1 10 H23 M1 16 H23 M8 4 V22 M15.500 4 V22" /></Ico>
      </RailItem>
      <RailItem>
        <Ico w={28} h={28} sw={1.600}><path d="M1 9 H12 V19 H1Z M1 12.500 H12 M16 1 H27 V12 H16Z M16 5 H27 M16 16 H27 V27 H16Z M16 20 H27 M7 9 V4 H16 M7 19 V24 H16" /></Ico>
      </RailItem>
    </Rail>
    <Canvas>
      <CanvasHead>
        <HeadRow>
          <Cell $w={23} />
          <Cell $w={40} $left><Ico w={16} h={24} sw={1.500}><path d="M15 1 L3 12 L15 23" /></Ico></Cell>
          <Cell $w={143} $left><Text $s={17} $ls={-0.05}>Back to report</Text></Cell>
          <VLine />
          <Cell $w={160} $left><Din $b={600} $c="#333" $ls={0.9}>TOTALREVENUE</Din></Cell>
          <Din $c="#666" $ls={0.55}>BY STOREMANAGER</Din>
        </HeadRow>
        <Spacer />
        <DarkButton><Funnel w={24} h={24} sw={2.200} /></DarkButton>
        <DarkButton>
          <Ico w={24} h={4}><g fill="#ddd" stroke="none"><circle cx="3" cy="2" r="1.500" /><circle cx="12" cy="2" r="1.500" /><circle cx="21" cy="2" r="1.500" /></g></Ico>
        </DarkButton>
      </CanvasHead>
      <Plot />
    </Canvas>
    <FilterPane>
      <DoubleChevron left />
      <Turned><Funnel w={17} h={17} sw={4.500} /></Turned>
      <VerticalText>Filters</VerticalText>
    </FilterPane>
    <VisualPane />
    <FieldsPane />
  </Workspace>
);

/* ---------- status bar ---------- */
const StatusBar = styled.div`
  height: 37px;
  flex: none;
  display: flex;
  align-items: center;
  background: #f7f7f7;
  border-top: 1px solid #e4deda;
  border-bottom: 2px solid #3c5068;
  color: #5c5955;
  padding: 1px 8px 0;
`;
const Slider = styled.div`
  width: 150px;
  height: 16px;
  display: flex;
  align-items: center;
  justify-content: center;
  background: linear-gradient(#8a8783, #8a8783) center / 100% 2px no-repeat;
  &::after {
    content: "";
    width: 6px;
    height: 16px;
    margin-right: 1px;
    background: #605c58;
  }
`;
const Status = () => (
  <StatusBar>
    <Text $s={17} $ls={0.05}>Page 1 of 1</Text>
    <Spacer />
    <Cell $w={22}><Ico w={6} h={4} sw={2.500}><path d="M0 3 H6" /></Ico></Cell>
    <Slider />
    <Cell $w={28}><Ico w={11} sw={1.500}><path d="M5.500 0 V11 M0 5.500 H11" /></Ico></Cell>
    <Cell $w={14} />
    <Cell $w={67} $left><Text $s={17} $ls={-0.7}>100%</Text></Cell>
    <Cell $w={52} $left>
      <Ico w={24} h={18} sw={1.700}><path d="M1 1 H23 V17 H1Z M4 7 V4 H8 M16 4 H20 V7 M20 11 V14 H16 M8 14 H4 V11" /></Ico>
    </Cell>
    <Cell $w={287} $left><Text $s={17} $ls={0.1}>Update available (click to download)</Text></Cell>
  </StatusBar>
);

/* ---------- remote taskbar ---------- */
const RemoteBar = styled.div`
  height: 61px;
  flex: none;
  display: flex;
  background: #000;
  color: #f0f0f0;
`;
const RemoteApp = styled.div`
  width: ${(p) => p.$w}px;
  margin-left: ${(p) => p.$ml || 0}px;
  display: flex;
  align-items: center;
  justify-content: center;
  background: ${(p) => (p.$on ? "#353535" : "transparent")};
  border-bottom: 3px solid ${(p) => (p.$run ? "#76b9ed" : "transparent")};
  padding-top: 4px;
`;
const Clock = styled.div`
  width: ${(p) => p.$w}px;
  display: flex;
  flex-direction: column;
  justify-content: center;
  align-items: ${(p) => p.$a || "center"};
  gap: ${(p) => p.$gap || 0}px;
`;
const TrayEdge = styled.div`
  width: 7px;
  border-left: 1px solid #666;
`;
const Remote = () => (
  <RemoteBar>
    <RemoteApp $w={72}>
      <Glyph width="26" height="25" viewBox="0 0 26 25" fill="#fff">
        <path d="M0 3.500 L11 2 V12 H0Z M12.500 1.800 L26 0 V12 H12.500Z M0 13.300 H11 V23 L0 21.500Z M12.500 13.300 H26 V25 L12.500 23.200Z" />
      </Glyph>
    </RemoteApp>
    <RemoteApp $w={72}><Lens w={25} sw={1.800} /></RemoteApp>
    <RemoteApp $w={72}>
      <Ico w={34} h={22} sw={1.800}><path d="M8 1 H26 V21 H8Z M5 4 H1 V18 H5 M29 4 H33 V18 H29" /></Ico>
    </RemoteApp>
    <RemoteApp $w={79}>
      <Glyph width="36" height="36" viewBox="0 0 36 36" fill="none">
        <path d="M30 24 C27 31 12 33 9 21 C7 9 28 5 29 19 H13" stroke="#45b9ee" strokeWidth="6.500" />
        <path d="M5 32 C-4 26 22 -3 33 4 C35 6 33 9 32 11" stroke="#f5c61c" strokeWidth="2.800" />
      </Glyph>
    </RemoteApp>
    <RemoteApp $w={69}><ChromeLogo w={37} /></RemoteApp>
    <RemoteApp $w={77}>
      <Glyph width="33" height="28" viewBox="0 0 33 28">
        <path d="M0 1 H14 V4 H33 V26 H0Z" fill="#f0c04a" />
        <path d="M0 6 H33 V26 H0Z" fill="#fde796" />
        <path d="M6 28 V15 H27 V28 H21 V21 H12 V28Z" fill="#2fb1ea" />
      </Glyph>
    </RemoteApp>
    <RemoteApp $w={72} $on $run>
      <Glyph width="30" height="38" viewBox="0 0 30 38">
        <rect x="17" y="1" width="12" height="36" rx="1" fill="#d7980c" />
        <rect x="9" y="10" width="12" height="27" rx="1" fill="#efb81c" />
        <rect x="1" y="19" width="12" height="18" rx="1" fill="#f8dc62" />
      </Glyph>
    </RemoteApp>
    <RemoteApp $w={60} $ml={7} $run>
      <Glyph width="36" height="38" viewBox="0 0 36 38" fill="none">
        <path d="M16 2 H28 V14 M1 20 V31 H12" stroke="#3f9a3c" strokeWidth="1.600" strokeDasharray="2.500 2" />
        <rect x="1" y="1" width="10" height="15" rx="2" fill="#eeb83c" />
        <rect x="3" y="1" width="4" height="15" fill="#fde7a0" />
        <path d="M13 36 L29 19" stroke="#c9953f" strokeWidth="3.500" />
        <path d="M14 19 L33 36" stroke="#b7c4d6" strokeWidth="3.500" />
        <path d="M10 20 L18 16 L20 21 L14 25Z M26 16 L34 19 L33 26" stroke="#9aa9bf" fill="#75869f" strokeWidth="2" />
      </Glyph>
    </RemoteApp>
    <Spacer />
    <Cell $w={32}><Chevron dir="up" w={20} sw={1.700} /></Cell>
    <Cell $w={36}>
      <Ico w={24} h={24} sw={1.500}>
        <path d="M1 9 H4 L9 3 V21 L4 16 H1Z" />
        <circle cx="18" cy="17" r="6.500" fill="#d8232e" stroke="none" />
        <path d="M15.500 14.500 L20.500 19.500 M20.500 14.500 L15.500 19.500" strokeWidth="1.800" />
      </Ico>
    </Cell>
    <Cell $w={43}>
      <Ico w={24} h={22} sw={1.700}><path d="M7 3 H23 V15 H9 M15 15 V20 M10 20.500 H20 M1 1 H6 V8 H1Z M3.500 8 V18" /></Ico>
    </Cell>
    <Clock $w={88} $gap={3}><Text $s={17.500} $ls={-0.5}>11:19 AM</Text><Text $s={17.500} $ls={-0.55}>9/15/2023</Text></Clock>
    <Cell $w={78}>
      <Ico w={36} h={38} sw={2}>
        <path d="M1 2 H25 V22 H14 L9 27 V22 H1Z" fill="#fff" stroke="none" />
        <path d="M5 7 H21 M5 12 H21 M5 17 H17" stroke="#111" />
        <circle cx="24" cy="26" r="11.500" fill="#333" stroke="#777" />
        <text x="24" y="33" fontSize="19" fill="#fff" stroke="none" textAnchor="middle">1</text>
      </Ico>
    </Cell>
    <TrayEdge />
  </RemoteBar>
);

/* ---------- local taskbar ---------- */
const LocalBar = styled.div`
  height: 72px;
  flex: none;
  display: flex;
  align-items: center;
  background: linear-gradient(90deg, #1b2130 0, #20231f 110px, #24241f 220px, #212121 300px);
  color: #f2f2f2;
`;
const Weather = styled.div`
  width: 523px;
  padding: 4px 0 0 41px;
  display: flex;
  flex-direction: column;
`;
const Pill = styled.div`
  width: 329px;
  height: 48px;
  margin: 1px 4px 0 0;
  border-radius: 24px;
  border: 1px solid #4a4a4a;
  background: #3a3a3a;
  display: flex;
  align-items: center;
  padding-left: 17px;
  gap: 15px;
`;
const PillEnd = styled.div`
  width: 85px;
  height: 42px;
  margin-left: auto;
  border-radius: 22px;
  background: #4e4e4e;
  display: flex;
  align-items: center;
  justify-content: center;
`;
const App11 = styled.div`
  flex: none;
  width: 60px;
  height: 60px;
  margin: 2px 3px 0;
  border-radius: 6px;
  display: flex;
  flex-direction: column;
  align-items: center;
  justify-content: space-between;
  padding-top: 10px;
  background: ${(p) => (p.$on ? "#323232" : "transparent")};
  border: 1px solid ${(p) => (p.$on ? "#3e3e3e" : "transparent")};
  &::after {
    content: "";
    width: ${(p) => (p.$on ? 24 : 9)}px;
    height: 5px;
    border-radius: 3px;
    background: ${(p) => (p.$on ? "#4cc2ff" : p.$run ? "#9a9a9a" : "transparent")};
  }
`;
const Badge25 = styled.div`
  width: 30px;
  height: 30px;
  border-radius: 50%;
  background: #4cc2ff;
  color: #111;
  font-size: 16px;
  letter-spacing: -0.5px;
  display: flex;
  align-items: center;
  justify-content: center;
`;
const Art = ({ children, w = 46 }) => <Glyph width={w} height="40" viewBox={`0 0 ${w} 40`}>{children}</Glyph>;
const LetterTile = ({ c, l, x = 0, y = 11 }) => (
  <>
    <rect x={x} y={y} width="19" height="19" rx="2" fill={c} />
    <text x={x + 9.500} y={y + 15} fontSize="15" fontWeight="700" fill="#fff" textAnchor="middle">{l}</text>
  </>
);

const Local = () => (
  <LocalBar>
    <Weather><Text $s={17} $ls={-0.6}>52°F</Text><Text $s={17} $ls={0} $c="#cfcfcf">Partly cloudy</Text></Weather>
    <Cell $w={74}>
      <Glyph width="36" height="36" viewBox="0 0 36 36">
        <defs><linearGradient id="win" x1="0" y1="0" x2="1" y2="1"><stop offset="0" stopColor="#86dbff" /><stop offset="1" stopColor="#0a8ff0" /></linearGradient></defs>
        <path d="M2 0 H17 V17 H0 V2 Q0 0 2 0Z M19 0 H34 Q36 0 36 2 V17 H19Z M0 19 H17 V36 H2 Q0 36 0 34Z M19 19 H36 V34 Q36 36 34 36 H19Z" fill="url(#win)" />
      </Glyph>
    </Cell>
    <Cell $w={1} />
    <Pill>
      <Lens w={23} sw={2.200} />
      <Text $s={19} $ls={-0.2} $c="#d4d4d4">Search</Text>
      <PillEnd>
        <Glyph width="38" height="30" viewBox="0 0 38 30">
          <path d="M14 5 V2 H24 V5" stroke="#222" strokeWidth="3.500" fill="none" />
          <rect y="5" width="38" height="25" rx="2" fill="#a85c02" />
          <rect y="5" width="38" height="14" rx="2" fill="#f39206" />
          <rect x="16" y="15" width="6" height="7" fill="#fbdc2e" />
        </Glyph>
      </PillEnd>
    </Pill>
    <App11>
      <Art w={38}><rect x="0" y="12" width="28" height="24" rx="1" fill="#666" /><rect x="10" y="3" width="28" height="24" rx="1" fill="#eee" /><rect x="10" y="12" width="18" height="15" fill="#bbb" /></Art>
    </App11>
    <App11>
      <Art w={38}>
        <path d="M0 4 H13 L16 7 V12 H0Z" fill="#d9970b" />
        <rect y="8" width="38" height="29" rx="1" fill="#fbcd46" />
        <path d="M0 4 H13 L15 7 L12 10 H0Z" fill="#d9970b" />
        <path d="M6 37 V28 Q6 25 9 25 H29 Q32 25 32 28 V37Z" fill="#1173c9" />
        <path d="M12 31 H26" stroke="#063e73" strokeWidth="1.500" />
      </Art>
    </App11>
    <App11 $on><ChromeLogo w={37} /></App11>
    <App11>
      <Art w={36}>
        <path d="M9 8 V2 H27 V8" stroke="#43b8ef" strokeWidth="2.200" fill="none" />
        <path d="M0 6 H36 V32 Q36 38 30 38 H6 Q0 38 0 32Z" fill="#ececec" />
        <rect x="10" y="14" width="7.500" height="7.500" fill="#f25022" /><rect x="18.500" y="14" width="7.500" height="7.500" fill="#7fba00" />
        <rect x="10" y="22.500" width="7.500" height="7.500" fill="#00a4ef" /><rect x="18.500" y="22.500" width="7.500" height="7.500" fill="#ffb900" />
      </Art>
    </App11>
    <App11 $run>
      <Art w={46}>
        <g transform="translate(5 0)">
          <rect x="9" y="3" width="27" height="30" fill="#1767b8" />
          <path d="M7 20 L36 20 V36 H7Z" fill="#2aa5ec" /><path d="M17 20 H36 V28 L26 24Z" fill="#0f4f96" />
          <LetterTile c="#0f6cbd" l="O" x={0} y={10} />
          <rect x="22" y="1" width="22" height="19" fill="#eeb272" /><path d="M22 1 L33 13 L44 1" stroke="#fff" strokeWidth="2" fill="none" />
        </g>
      </Art>
    </App11>
    <App11 $run>
      <Art w={40}>
        <g transform="translate(2 0)">
          <circle cx="18" cy="8" r="6" fill="#7b83eb" /><path d="M28 16 H37 V27 Q37 34 30 34 H24Z" fill="#5059c9" />
          <path d="M10 16 H29 V28 Q29 38 20 38 Q10 38 10 28Z" fill="#7b83eb" />
          <LetterTile c="#4b53bc" l="T" x={0} y={10} />
          <circle cx="34" cy="7" r="7.500" fill="#7fba00" stroke="#e9f5d0" strokeWidth="1" /><path d="M30.500 7 L33.500 10 L38 4" stroke="#fff" strokeWidth="2" fill="none" />
        </g>
      </Art>
    </App11>
    <App11 $run>
      <Art w={36}>
        <path d="M9 2 H36 V11 H9Z" fill="#41a5ee" /><path d="M9 11 H36 V20 H9Z" fill="#2b7cd3" /><path d="M9 20 H36 V29 H9Z" fill="#185abd" /><path d="M9 29 H36 V38 H9Z" fill="#103f91" />
        <LetterTile c="#1a56b4" l="W" x={0} y={10} />
      </Art>
    </App11>
    <Spacer />
    <Cell $w={38}><Chevron dir="up" w={20} sw={1.500} /></Cell>
    <Cell $w={34}>
      <Glyph width="24" height="17" viewBox="0 0 25 17">
        <path d="M6 17 A5.500 5.500 0 0 1 4.500 6.500 A8 8 0 0 1 19 6 A5.500 5.500 0 0 1 20 17Z" fill="#1490df" />
        <path d="M4.500 6.500 A8 8 0 0 1 19 6 L10 11Z" fill="#0a5fb4" />
      </Glyph>
    </Cell>
    <Cell $w={49}>
      <Ico w={24} h={24} sw={1.700}><path d="M15 3 H1 V17 H19 V12 M10 17 V22 M4 22.500 H16 M17 1 H22 V7 H17Z M19.500 7 V14 H16" /></Ico>
    </Cell>
    <Cell $w={24}>
      <Ico w={24} h={20} sw={1.600}><path d="M1 7 H4 L9 2 V18 L4 13 H1Z M14 6 L23 14 M23 6 L14 14" /></Ico>
    </Cell>
    <Cell $w={48}>
      <Ico w={24} h={20} sw={1.600}><path d="M9 4 H21 V16 H6 V12 M22 7 H24 V13 H22 M1 3 H9 V7 Q9 10 5 10 Q1 10 1 7Z M3 3 V0 M7 3 V0 M5 10 V18" /><path d="M9 8 H14 V14 H9Z" fill="currentColor" stroke="none" /></Ico>
    </Cell>
    <Clock $w={92} $a="flex-end"><Text $s={17} $ls={-0.75}>11:19 AM</Text><Text $s={17} $ls={-0.5}>9/15/2023</Text></Clock>
    <Cell $w={46}><Badge25>25</Badge25></Cell>
    <Cell $w={19} />
  </LocalBar>
);

export default function App() {
  return (
    <Screen>
      <Global />
      <Browser />
      <Title />
      <Ribbon />
      <Main />
      <Status />
      <Remote />
      <Local />
    </Screen>
  );
}
